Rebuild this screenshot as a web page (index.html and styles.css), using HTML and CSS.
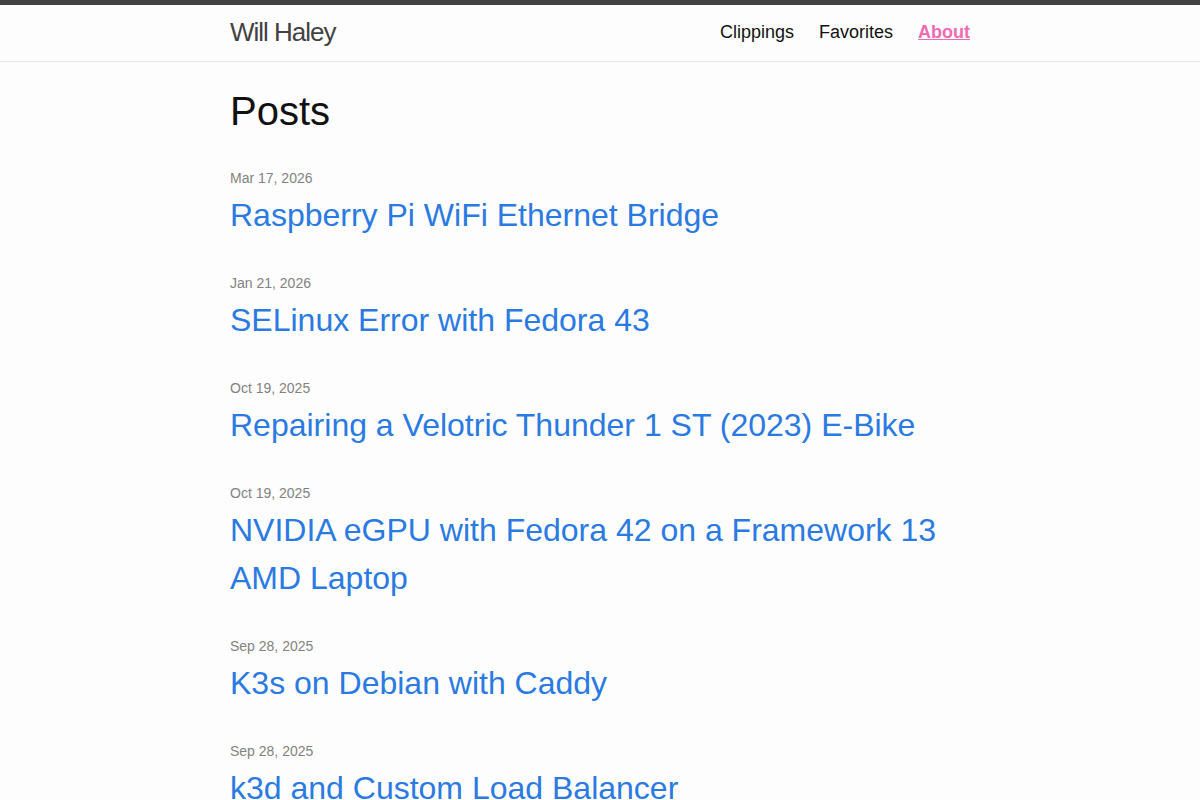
FILE: index.html
```html
<!DOCTYPE html>
<html lang="en">
<head>
<meta charset="utf-8">
<title>Will Haley</title>
<link rel="stylesheet" href="styles.css">
</head>
<body>
<header class="site-header">
  <div class="wrapper header-inner">
    <a class="site-title" href="#">Will Haley</a>
    <nav class="site-nav">
      <a class="page-link" href="#">Clippings</a>
      <a class="page-link" href="#">Favorites</a>
      <a class="page-link active" href="#">About</a>
    </nav>
  </div>
</header>
<main class="page-content">
  <div class="wrapper">
    <h1 class="page-heading">Posts</h1>
    <ul class="post-list">
      <li class="post-item">
        <span class="post-meta">Mar 17, 2026</span>
        <h3 class="post-title"><a class="post-link" href="#">Raspberry Pi WiFi Ethernet Bridge</a></h3>
      </li>
      <li class="post-item">
        <span class="post-meta">Jan 21, 2026</span>
        <h3 class="post-title"><a class="post-link" href="#">SELinux Error with Fedora 43</a></h3>
      </li>
      <li class="post-item">
        <span class="post-meta">Oct 19, 2025</span>
        <h3 class="post-title"><a class="post-link" href="#">Repairing a Velotric Thunder 1 ST (2023) E-Bike</a></h3>
      </li>
      <li class="post-item">
        <span class="post-meta">Oct 19, 2025</span>
        <h3 class="post-title"><a class="post-link" href="#">NVIDIA eGPU with Fedora 42 on a Framework 13 AMD Laptop</a></h3>
      </li>
      <li class="post-item">
        <span class="post-meta">Sep 28, 2025</span>
        <h3 class="post-title"><a class="post-link" href="#">K3s on Debian with Caddy</a></h3>
      </li>
      <li class="post-item">
        <span class="post-meta">Sep 28, 2025</span>
        <h3 class="post-title"><a class="post-link" href="#">k3d and Custom Load Balancer</a></h3>
      </li>
      <li class="post-item">
        <span class="post-meta">Sep 14, 2025</span>
        <h3 class="post-title"><a class="post-link" href="#">Notes</a></h3>
      </li>
    </ul>
  </div>
</main>
</body>
</html>
```

FILE: styles.css
```css
html, body {
  margin: 0;
  padding: 0;
}
body {
  font-family: "Liberation Sans", Arial, Helvetica, sans-serif;
  font-size: 16px;
  line-height: 1.5;
  color: #111111;
  background: #fdfdfd;
}
.wrapper {
  max-width: 740px;
  margin: 0 auto;
  padding: 0 30px;
}
.site-header {
  border-top: 5px solid #424242;
  border-bottom: 1px solid #e8e8e8;
  background: #fdfdfd;
}
.header-inner {
  display: flex;
  justify-content: space-between;
  align-items: flex-start;
  height: 56px;
}
.site-title {
  font-size: 26px;
  font-weight: 300;
  letter-spacing: -1px;
  color: #424242;
  text-decoration: none;
  line-height: 54px;
}
.site-nav {
  display: flex;
  gap: 25px;
}
.page-link {
  font-size: 18px;
  color: #111111;
  text-decoration: none;
  line-height: 54px;
}
.page-link.active {
  color: #f06ab4;
  font-weight: 700;
  text-decoration: underline;
}
.page-content {
  padding-top: 19px;
}
.page-heading {
  font-size: 40px;
  font-weight: 400;
  line-height: 60px;
  margin: 0 0 25px;
}
.post-list {
  list-style: none;
  margin: 0;
  padding: 0;
}
.post-item {
  margin-bottom: 32px;
}
.post-meta {
  display: block;
  font-size: 14px;
  color: #828282;
  line-height: 25px;
}
.post-title {
  margin: 0;
  font-size: 32px;
  font-weight: 400;
  line-height: 48px;
}
.post-link {
  color: #2a7ae2;
  text-decoration: none;
}
```
